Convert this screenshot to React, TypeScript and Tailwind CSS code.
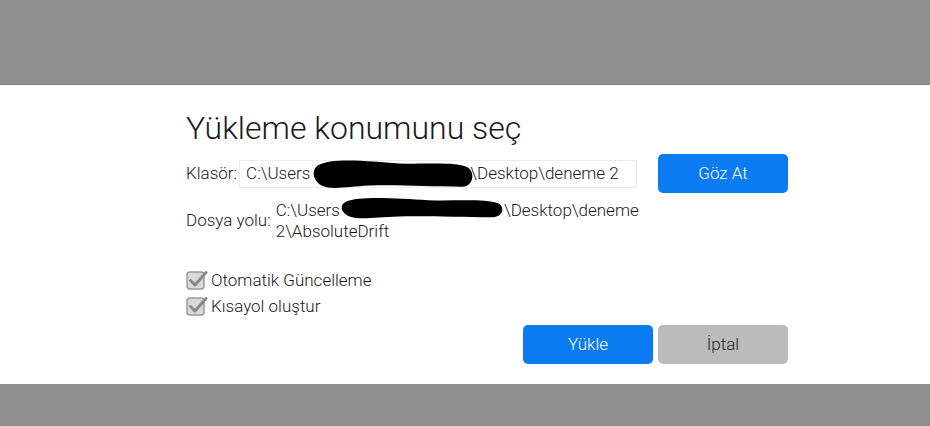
import React from 'react'

const Redact = ({ className }: { className: string }) => (
    <svg className={`absolute pointer-events-none ${className}`} viewBox="0 0 170 36" preserveAspectRatio="none">
        <path d="M6 10 C20 2 60 6 90 8 C120 9 150 6 162 12 C170 18 166 30 156 30 C120 30 90 28 60 29 C35 30 18 34 8 28 C0 22 0 14 6 10 Z" fill="#000" />
    </svg>
)

const CheckBox = () => (
    <svg width="22" height="22" viewBox="0 0 22 22" className="shrink-0">
        <rect x="1" y="3" width="17" height="17" rx="3" fill="#d9d9d9" stroke="#9a9a9a" strokeWidth="1.5" />
        <path d="M4.5 11.5 L9 16 L20 3.5" fill="none" stroke="#8a8a8a" strokeWidth="3" strokeLinecap="round" strokeLinejoin="round" />
    </svg>
)

export default function App() {
    return (
        <div className="w-[930px] h-[426px] bg-[#8f8f8f] flex flex-col" style={{ fontFamily: 'Roboto, "Liberation Sans", sans-serif' }}>
            <div className="h-[85px] border-b border-[#878787]" />
            <div className="h-[299px] bg-white">
                <div className="ml-[186px] w-[602px] flex flex-col text-[#1a1a1a]">
                    <h1 className="mt-[21px] text-[32px] leading-[44px] font-light">Yükleme konumunu seç</h1>
                    <div className="mt-[4px] flex items-center h-[39px]">
                        <span className="text-[17px] font-light">Klasör:</span>
                        <div className="relative ml-[2px] w-[398px] h-[28px] border border-[#ececec] flex items-center pl-[6px] text-[17px] font-light">
                            C:\Users<span className="w-[160px]" />\Desktop\deneme 2
                            <Redact className="left-[72px] top-[-6px] w-[164px] h-[38px]" />
                        </div>
                        <button className="ml-auto w-[130px] h-[39px] rounded-[5px] bg-[#0a7bf0] text-white text-[17px] font-light">Göz At</button>
                    </div>
                    <div className="mt-[7px] flex items-center">
                        <span className="text-[17px] font-light">Dosya yolu:</span>
                        <div className="relative ml-[5px] w-[375px] text-[17px] leading-[21px] font-light">
                            C:\Users<span className="inline-block w-[164px]" />\Desktop\deneme 2\AbsoluteDrift
                            <Redact className="left-[64px] top-[-6px] w-[166px] h-[28px]" />
                        </div>
                    </div>
                    <div className="mt-[27px] flex flex-col gap-[4px]">
                        <label className="flex items-center gap-[3px] text-[17px] leading-[22px] font-light">
                            <CheckBox />Otomatik Güncelleme
                        </label>
                        <label className="flex items-center gap-[3px] text-[17px] leading-[22px] font-light">
                            <CheckBox />Kısayol oluştur
                        </label>
                    </div>
                    <div className="mt-[8px] flex justify-end gap-[5px]">
                        <button className="w-[130px] h-[39px] rounded-[5px] bg-[#0a7bf0] text-white text-[17px] font-light">Yükle</button>
                        <button className="w-[130px] h-[39px] rounded-[5px] bg-[#bbbbbb] text-[#222] text-[17px] font-light">İptal</button>
                    </div>
                </div>
            </div>
            <div className="flex-1" />
        </div>
    )
}
